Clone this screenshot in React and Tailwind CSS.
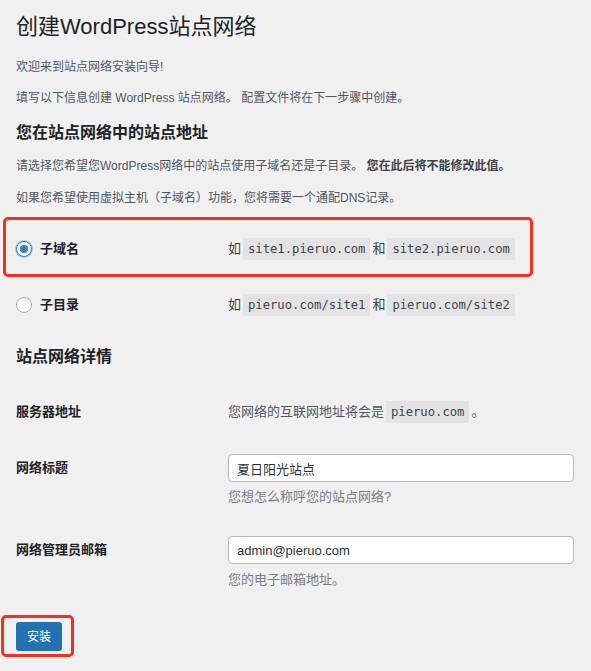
import React from 'react'

const Code = ({ children }) => (
    <code className="bg-[#e3e3e4] px-[5px] pt-[2px] pb-[1px] text-[12.2px] text-[#3c434a] [font-family:'DejaVu_Sans_Mono',monospace]">
        {children}
    </code>
);

const Radio = ({ checked }) => (
    checked ? (
        <span className="flex h-4 w-4 items-center justify-center rounded-full border-[1.5px] border-[#3582c4] bg-white shadow-[0_0_0_1px_#9ec2e6]">
            <span className="h-2 w-2 rounded-full bg-[#2f7fc7]" />
        </span>
    ) : (
        <span className="h-4 w-4 rounded-full border border-[#a7aaad] bg-white" />
    )
);

const App = () => {
    return (
        <div className="min-h-screen bg-[#f0f0f1] px-4 pt-[13px] pb-4 text-[#50575e] [font-family:'Liberation_Sans','Noto_Sans_CJK_SC',sans-serif]">
            <h1 className="text-[22px] leading-[28px] text-[#1d2327]">创建WordPress站点网络</h1>

            <p className="mt-4 text-[12px] leading-5">欢迎来到站点网络安装向导!</p>
            <p className="mt-[11px] text-[12px] leading-5">填写以下信息创建 WordPress 站点网络。 配置文件将在下一步骤中创建。</p>

            <h2 className="mt-[14px] text-[16px] font-bold leading-[22px] text-[#1d2327]">您在站点网络中的站点地址</h2>
            <p className="mt-3 text-[12px] leading-5">
                请选择您希望您WordPress网络中的站点使用子域名还是子目录。 <strong className="text-[#3c434a]">您在此后将不能修改此值。</strong>
            </p>
            <p className="mt-3 text-[12px] leading-5">如果您希望使用虚拟主机（子域名）功能，您将需要一个通配DNS记录。</p>

            {/* address type choice */}
            <div className="relative mt-[13px] flex h-14 items-center">
                <div className="flex w-[212px] items-center gap-2">
                    <Radio checked />
                    <span className="text-[13px] font-bold text-[#1d2327]">子域名</span>
                </div>
                <div className="flex items-center gap-0.5 text-[13px] text-[#3c434a]">
                    如 <Code>site1.pieruo.com</Code> 和 <Code>site2.pieruo.com</Code>
                </div>
                <span className="pointer-events-none absolute -top-1 bottom-0 -left-[13px] right-[42px] rounded-[5px] border-[3px] border-[#f5301f]" />
            </div>
            <div className="flex h-14 items-center">
                <div className="flex w-[212px] items-center gap-2">
                    <Radio />
                    <span className="text-[13px] font-bold text-[#1d2327]">子目录</span>
                </div>
                <div className="flex items-center gap-0.5 text-[13px] text-[#3c434a]">
                    如 <Code>pieruo.com/site1</Code> 和 <Code>pieruo.com/site2</Code>
                </div>
            </div>

            <h2 className="mt-[13px] text-[16px] font-bold leading-[22px] text-[#1d2327]">站点网络详情</h2>

            <div className="mt-8 flex h-6 items-center">
                <div className="w-[212px] text-[13px] font-bold text-[#1d2327]">服务器地址</div>
                <div className="flex items-center gap-0.5 text-[13px] text-[#50575e]">
                    您网络的互联网地址将会是 <Code>pieruo.com</Code> 。
                </div>
            </div>

            <div className="mt-[30px] flex">
                <div className="flex h-7 w-[212px] items-center text-[13px] font-bold text-[#1d2327]">网络标题</div>
                <div className="flex-1">
                    <input
                        className="block h-7 w-[346px] rounded-[4px] border border-[#b8babd] bg-white px-[8px] text-[13px] text-[#2c3338] outline-none"
                        defaultValue="夏日阳光站点"
                    />
                    <p className="mt-[6px] text-[13px] leading-[18px] text-[#7a7e83]">您想怎么称呼您的站点网络?</p>
                </div>
            </div>

            <div className="mt-[30px] flex">
                <div className="flex h-7 w-[212px] items-center text-[13px] font-bold text-[#1d2327]">网络管理员邮箱</div>
                <div className="flex-1">
                    <input
                        className="block h-7 w-[346px] rounded-[4px] border border-[#b8babd] bg-white px-[8px] text-[13px] text-[#2c3338] outline-none"
                        defaultValue="admin@pieruo.com"
                    />
                    <p className="mt-[7px] text-[13px] leading-[18px] text-[#7a7e83]">您的电子邮箱地址。</p>
                </div>
            </div>

            <div className="relative mt-[33px] inline-block">
                <button className="h-[29px] w-[46px] rounded-[3px] bg-[#2271b1] text-[12px] text-white">安装</button>
                <span className="pointer-events-none absolute -top-[7px] -bottom-[6px] -left-[15px] -right-[12px] rounded-[5px] border-[3px] border-[#f5301f]" />
            </div>
        </div>
    );
};

export default App;
